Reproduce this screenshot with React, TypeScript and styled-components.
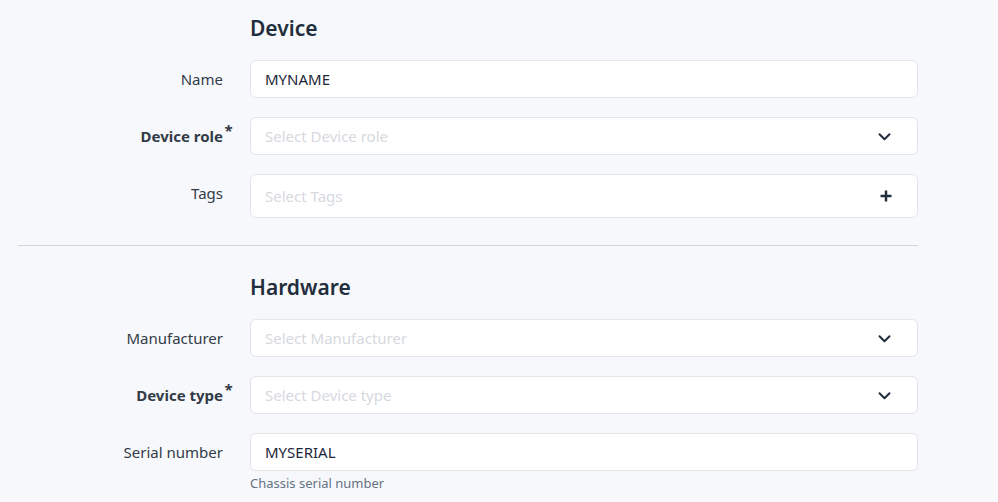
import React from 'react';
import styled, { createGlobalStyle } from 'styled-components';

const Global = createGlobalStyle`
  html, body {
    margin: 0;
    padding: 0;
    background: #f6f8fb;
  }
  body {
    font-family: "Noto Sans", "Open Sans", sans-serif;
    color: #1d273b;
  }
`;

const Page = styled.div`
  width: 900px;
  padding: 12px 0 0 18px;
`;

const Section = styled.section`
  display: flex;
  flex-direction: column;
`;

const Heading = styled.h2`
  margin: 0 0 16px 232px;
  font-size: 21px;
  font-weight: 600;
  line-height: 32px;
  color: #232e3c;
`;

const Divider = styled.hr`
  border: 0;
  border-top: 1px solid #d3d5d9;
  margin: 8px 0 25px;
`;

const Row = styled.div`
  display: grid;
  grid-template-columns: 205px 1fr;
  column-gap: 27px;
  align-items: start;
  margin-bottom: 19px;
`;

const Label = styled.label<{ $required?: boolean }>`
  text-align: right;
  line-height: 38px;
  font-size: 15px;
  font-weight: ${p => (p.$required ? 700 : 400)};
  color: #333b47;
  white-space: nowrap;
`;

const Star = styled.span`
  display: inline-block;
  width: 11px;
  margin-right: -11px;
  text-align: center;
  font-size: 15px;
  font-weight: 700;
  line-height: 1;
  transform: translateY(-6px);
`;

const Field = styled.div`
  display: flex;
  flex-direction: column;
  gap: 3px;
`;

const Box = styled.div<{ $tall?: boolean }>`
  box-sizing: border-box;
  height: ${p => (p.$tall ? 44 : 38)}px;
  display: flex;
  align-items: center;
  justify-content: space-between;
  padding: 0 25px 0 14px;
  background: #fff;
  border: 1px solid #e3e5e9;
  border-radius: 6px;
  font-size: 15px;
`;

const Value = styled.span`
  color: #1d273b;
`;

const Placeholder = styled.span`
  color: #d6d9de;
`;

const Help = styled.div`
  font-size: 13px;
  line-height: 18px;
  color: #667382;
`;

const Chevron = () => (
  <svg width="15" height="15" viewBox="0 0 24 24" fill="none" stroke="#232e3c" strokeWidth="3.2" strokeLinecap="round" strokeLinejoin="round">
    <polyline points="4 8.5 12 16.5 20 8.5" />
  </svg>
);

const Plus = () => (
  <svg width="12" height="12" viewBox="0 0 24 24" fill="none" stroke="#232e3c" strokeWidth="5" strokeLinecap="butt">
    <line x1="12" y1="1" x2="12" y2="23" />
    <line x1="1" y1="12" x2="23" y2="12" />
  </svg>
);

type FieldDef = {
  label: string;
  required?: boolean;
  value?: string;
  placeholder?: string;
  icon?: 'chevron' | 'plus';
  help?: string;
};

const device: FieldDef[] = [
  { label: 'Name', value: 'MYNAME' },
  { label: 'Device role', required: true, placeholder: 'Select Device role', icon: 'chevron' },
  { label: 'Tags', placeholder: 'Select Tags', icon: 'plus' },
];

const hardware: FieldDef[] = [
  { label: 'Manufacturer', placeholder: 'Select Manufacturer', icon: 'chevron' },
  { label: 'Device type', required: true, placeholder: 'Select Device type', icon: 'chevron' },
  { label: 'Serial number', value: 'MYSERIAL', help: 'Chassis serial number' },
];

const FormRow: React.FC<{ f: FieldDef }> = ({ f }) => (
  <Row>
    <Label $required={f.required}>
      {f.label}
      {f.required && <Star>*</Star>}
    </Label>
    <Field>
      <Box $tall={f.icon === 'plus'}>
        {f.value ? <Value>{f.value}</Value> : <Placeholder>{f.placeholder}</Placeholder>}
        {f.icon === 'chevron' && <Chevron />}
        {f.icon === 'plus' && <Plus />}
      </Box>
      {f.help && <Help>{f.help}</Help>}
    </Field>
  </Row>
);

const App: React.FC = () => (
  <Page>
    <Global />
    <Section>
      <Heading>Device</Heading>
      {device.map(f => <FormRow key={f.label} f={f} />)}
    </Section>
    <Divider />
    <Section>
      <Heading>Hardware</Heading>
      {hardware.map(f => <FormRow key={f.label} f={f} />)}
    </Section>
  </Page>
);

export default App;
